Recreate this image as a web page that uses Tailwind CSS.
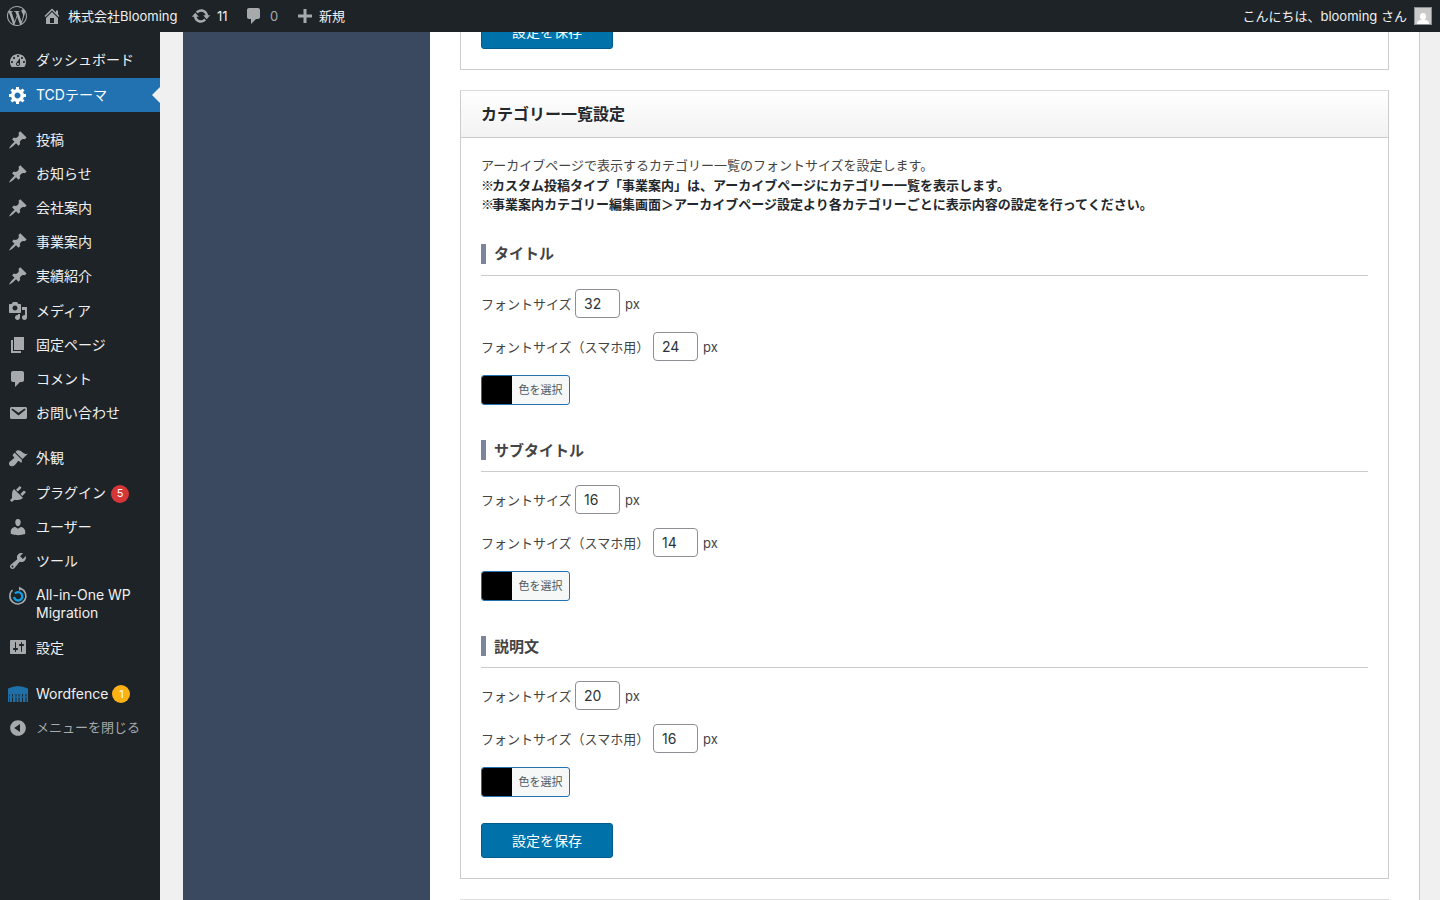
<!DOCTYPE html>
<html lang="ja">
<head>
    <meta charset="UTF-8">
    <title>TCDテーマ</title>
    <script src="https://cdn.jsdelivr.net/npm/@tailwindcss/browser@4"></script>
</head>
<body class="h-[900px] overflow-hidden bg-[#f0f0f1] font-['Inter','Noto_Sans_CJK_JP',sans-serif] text-[13px] text-[#444]">

    <!-- shared icons -->
    <svg class="hidden">
        <symbol id="pin" viewBox="0 0 20 20"><path d="M10.44 3.02l1.82-1.82 6.36 6.35-1.83 1.82c-1.05-.68-2.48-.57-3.41.36l-.75.75c-.92.93-1.04 2.35-.35 3.41l-1.83 1.82-2.41-2.41-2.8 2.79c-.42.42-3.38 2.71-3.8 2.29s1.86-3.39 2.28-3.81l2.79-2.79L4.1 9.36l1.83-1.82c1.05.69 2.48.57 3.4-.36l.75-.75c.93-.92 1.05-2.35.36-3.41z"/></symbol>
        <symbol id="comment" viewBox="0 0 20 20"><path d="M5 2h9c1.1 0 2 .9 2 2v7c0 1.1-.9 2-2 2h-2l-5 5v-5H5c-1.1 0-2-.9-2-2V4c0-1.1.9-2 2-2z"/></symbol>
    </svg>

    <!-- Admin Bar -->
    <div class="relative z-10 h-8 bg-[#1d2327] flex items-center justify-between text-[#f0f0f1] pl-[7px] pr-2">
        <div class="flex items-center">
            <svg class="w-5 h-5 fill-[#a7aaad]" viewBox="0 0 24 24"><path d="M21.469 6.825c.84 1.537 1.318 3.3 1.318 5.175 0 3.979-2.156 7.456-5.363 9.325l3.295-9.527c.615-1.54.82-2.771.82-3.864 0-.405-.026-.78-.07-1.11m-7.981.105c.647-.03 1.232-.105 1.232-.105.582-.075.514-.93-.067-.899 0 0-1.755.135-2.88.135-1.064 0-2.85-.15-2.85-.15-.585-.03-.661.855-.075.885 0 0 .54.061 1.125.09l1.68 4.605-2.37 7.08L5.354 6.9c.649-.03 1.234-.1 1.234-.1.585-.075.516-.93-.065-.896 0 0-1.746.138-2.874.138-.2 0-.438-.008-.69-.015C4.911 3.15 8.235 1.215 12 1.215c2.809 0 5.365 1.072 7.286 2.833-.046-.003-.091-.009-.141-.009-1.06 0-1.812.923-1.812 1.914 0 .89.513 1.643 1.06 2.531.411.72.89 1.643.89 2.977 0 .915-.354 1.994-.821 3.479l-1.075 3.585-3.9-11.61.001.014zM12 22.784c-1.059 0-2.081-.153-3.048-.437l3.237-9.406 3.315 9.087c.024.053.05.101.078.149-1.12.393-2.325.609-3.582.609M1.211 12c0-1.564.336-3.05.935-4.39L7.29 21.709C3.694 19.96 1.212 16.271 1.211 12M12 0C5.385 0 0 5.385 0 12s5.385 12 12 12 12-5.385 12-12S18.615 0 12 0"/></svg>
            <svg class="w-5 h-5 ml-[15px] fill-[#a7aaad]" viewBox="0 0 20 20"><path d="M16 8.5l1.53 1.53-1.06 1.06L10 4.62l-6.47 6.47-1.06-1.06L10 2.5l4 4v-2h2v4zm-6-2.46l6 5.99V18H4v-5.97zM12 17v-5H8v5h4z"/></svg>
            <span class="ml-[6px] w-[108px] pt-px whitespace-nowrap">株式会社Blooming</span>
            <svg class="w-5 h-5 ml-[15px] fill-[#a7aaad]" viewBox="0 0 20 20"><path d="M10.2 3.28c3.53 0 6.43 2.61 6.92 6h2.08l-3.5 4-3.5-4h2.32c-.45-1.97-2.21-3.45-4.32-3.45-1.45 0-2.73.71-3.54 1.78L4.95 5.66C6.23 4.2 8.11 3.28 10.2 3.28zm-.4 13.44c-3.52 0-6.43-2.61-6.92-6H.8l3.5-4c1.17 1.33 2.33 2.67 3.5 4H5.48c.45 1.97 2.21 3.45 4.32 3.45 1.45 0 2.73-.71 3.54-1.78l1.71 1.95c-1.28 1.46-3.15 2.38-5.25 2.38z"/></svg>
            <span class="ml-[6px] w-[14px] pt-px">11</span>
            <svg class="w-5 h-5 ml-[13px] fill-[#a7aaad]"><use href="#comment"/></svg>
            <span class="ml-[6px] w-[12px] pt-px text-[#a7aaad]">0</span>
            <svg class="w-5 h-5 ml-[13px] fill-[#a7aaad]" viewBox="0 0 20 20"><path d="M17 8.5v3h-5.5V17h-3v-5.5H3v-3h5.5V3h3v5.5z"/></svg>
            <span class="ml-[4px] pt-px whitespace-nowrap">新規</span>
        </div>
        <div class="flex items-center gap-[7px]">
            <span class="pt-px whitespace-nowrap">こんにちは、blooming さん</span>
            <div class="w-[18px] h-[18px] border border-[#8c8f94] bg-[#c9c9c9] flex flex-col items-center justify-end overflow-hidden">
                <div class="w-[6px] h-[7px] rounded-full bg-white"></div>
                <div class="w-[12px] h-[4px] rounded-t-full bg-white"></div>
            </div>
        </div>
    </div>

    <div class="flex h-[868px]">
        <!-- Sidebar -->
        <nav class="w-40 shrink-0 bg-[#1d2327] pt-[11px] text-[14px] leading-[18.2px] text-[#f0f0f1]">
            <a class="flex items-center h-[35px]">
                <svg class="w-5 h-5 ml-2 mr-2 fill-[#a7aaad]" viewBox="0 0 20 20"><path d="M3.76 16h12.48c1.1-1.37 1.76-3.11 1.76-5 0-4.42-3.58-8-8-8s-8 3.58-8 8c0 1.89.66 3.63 1.76 5zM10 4c.55 0 1 .45 1 1s-.45 1-1 1-1-.45-1-1 .45-1 1-1zM6 6c.55 0 1 .45 1 1s-.45 1-1 1-1-.45-1-1 .45-1 1-1zm8 0c.55 0 1 .45 1 1s-.45 1-1 1-1-.45-1-1 .45-1 1-1zm-5.37 5.55L12 7v6c0 1.1-.9 2-2 2s-2-.9-2-2c0-.57.24-1.08.63-1.45zM4 10c.55 0 1 .45 1 1s-.45 1-1 1-1-.45-1-1 .45-1 1-1zm12 0c.55 0 1 .45 1 1s-.45 1-1 1-1-.45-1-1 .45-1 1-1zm-5 3c0-.55-.45-1-1-1s-1 .45-1 1 .45 1 1 1 1-.45 1-1z"/></svg>
                ダッシュボード
            </a>
            <a class="relative flex items-center h-[34.2px] bg-[#2271b1] text-white">
                <svg class="w-5 h-5 ml-2 mr-2 fill-white" viewBox="0 0 20 20"><path d="M18 12h-2.18c-.17.7-.44 1.35-.81 1.93l1.54 1.54-2.1 2.1-1.54-1.54c-.58.36-1.23.63-1.91.79V19H8v-2.18c-.68-.16-1.33-.43-1.91-.79l-1.54 1.54-2.12-2.12 1.54-1.54c-.36-.58-.63-1.23-.79-1.91H1V9.03h2.17c.16-.7.44-1.35.8-1.94L2.43 5.55l2.1-2.1 1.54 1.54c.58-.37 1.24-.64 1.93-.81V2h3v2.18c.68.16 1.33.43 1.91.79l1.54-1.54 2.12 2.12-1.54 1.54c.36.59.64 1.24.8 1.94H18V12zm-8.5 1.5c1.66 0 3-1.34 3-3s-1.34-3-3-3-3 1.34-3 3 1.34 3 3 3z"/></svg>
                TCDテーマ
                <span class="absolute right-0 top-[9px] border-y-[8px] border-r-[8px] border-y-transparent border-r-[#f0f0f1]"></span>
            </a>

            <div class="h-[10.4px]"></div>
            <a class="flex items-center h-[34.2px]"><svg class="w-5 h-5 ml-2 mr-2 fill-[#a7aaad]"><use href="#pin"/></svg>投稿</a>
            <a class="flex items-center h-[34.2px]"><svg class="w-5 h-5 ml-2 mr-2 fill-[#a7aaad]"><use href="#pin"/></svg>お知らせ</a>
            <a class="flex items-center h-[34.2px]"><svg class="w-5 h-5 ml-2 mr-2 fill-[#a7aaad]"><use href="#pin"/></svg>会社案内</a>
            <a class="flex items-center h-[34.2px]"><svg class="w-5 h-5 ml-2 mr-2 fill-[#a7aaad]"><use href="#pin"/></svg>事業案内</a>
            <a class="flex items-center h-[34.2px]"><svg class="w-5 h-5 ml-2 mr-2 fill-[#a7aaad]"><use href="#pin"/></svg>実績紹介</a>
            <a class="flex items-center h-[34.2px]">
                <svg class="w-5 h-5 ml-2 mr-2 fill-[#a7aaad]" viewBox="0 0 20 20"><path d="M13 11V4c0-.55-.45-1-1-1h-1.67L9 1H5L3.67 3H2c-.55 0-1 .45-1 1v7c0 .55.45 1 1 1h10c.55 0 1-.45 1-1zM7 4.5c1.38 0 2.5 1.12 2.5 2.5S8.38 9.5 7 9.5 4.5 8.38 4.5 7 5.62 4.5 7 4.5zM14 6h5v10.5c0 1.38-1.12 2.5-2.5 2.5S14 17.88 14 16.5s1.12-2.5 2.5-2.5c.17 0 .34.02.5.05V9h-3V6zm-4 8.05V13h2v3.5c0 1.38-1.12 2.5-2.5 2.5S7 17.88 7 16.5 8.12 14 9.5 14c.17 0 .34.02.5.05z"/></svg>
                メディア
            </a>
            <a class="flex items-center h-[34.2px]">
                <svg class="w-5 h-5 ml-2 mr-2 fill-[#a7aaad]" viewBox="0 0 20 20"><path d="M6 15V2h10v13H6zm-1 1h8v2H3V5h2v11z"/></svg>
                固定ページ
            </a>
            <a class="flex items-center h-[34.2px]"><svg class="w-5 h-5 ml-2 mr-2 fill-[#a7aaad]"><use href="#comment"/></svg>コメント</a>
            <a class="flex items-center h-[34.2px]">
                <svg class="w-5 h-5 ml-2 mr-2 fill-[#a7aaad]" viewBox="0 0 20 20"><path d="M3.87 4h13.25C18.37 4 19 4.59 19 5.79v8.42c0 1.19-.63 1.79-1.88 1.79H3.87c-1.25 0-1.88-.6-1.88-1.79V5.79c0-1.2.63-1.79 1.88-1.79zm6.62 8.6l6.74-5.53c.24-.2.43-.66.13-1.07-.29-.41-.82-.42-1.17-.17l-5.7 3.86L4.8 5.83c-.35-.25-.88-.24-1.17.17-.3.41-.11.87.13 1.07z"/></svg>
                お問い合わせ
            </a>

            <div class="h-[11px]"></div>
            <a class="flex items-center h-[34.2px]">
                <svg class="w-5 h-5 ml-2 mr-2 fill-[#a7aaad]" viewBox="0 0 20 20"><path d="M14.48 11.06L7.41 3.99l1.5-1.5c.5-.56 2.3-.47 3.51.32 1.21.8 1.43 1.28 2.91 2.1 1.18.64 2.45 1.26 4.45.85zm-.71.71L6.7 4.7 4.93 6.47c-.39.39-.39 1.02 0 1.41l1.06 1.06c.39.39.39 1.03 0 1.42-.6.6-1.43 1.11-2.21 1.69-.35.26-.7.53-1.01.84C1.43 13.23 1 14.4 1 15.8c0 .86.36 1.43.72 1.79.49.49 1.13.7 1.78.7 1.4 0 2.55-.42 3.89-1.79.31-.31.58-.66.84-1.01.58-.78 1.09-1.61 1.69-2.21.39-.39 1.02-.39 1.41 0l1.06 1.06c.39.39 1.02.39 1.41 0z"/></svg>
                外観
            </a>
            <a class="flex items-center h-[34.2px] pt-[2px]">
                <svg class="w-5 h-5 ml-2 mr-2 fill-[#a7aaad]" viewBox="0 0 20 20"><path d="M13.11 4.36L9.87 7.6 8 5.73l3.24-3.24c.35-.34 1.05-.2 1.56.32.52.51.66 1.21.31 1.55zm-8 1.77l.91-1.12 9.01 9.01-1.19.84c-.71.71-2.63 1.16-3.82 1.16H6.14L4.9 17.26c-.59.59-1.54.59-2.12 0-.59-.58-.59-1.53 0-2.12l1.24-1.24v-3.88c0-1.13.4-3.19 1.09-3.89zm7.26 3.97l3.24-3.24c.34-.35 1.04-.21 1.55.31.52.51.66 1.21.31 1.55l-3.24 3.25z"/></svg>
                プラグイン
                <span class="ml-[5px] w-[18px] h-[18px] rounded-full bg-[#d63638] text-white text-[11px] flex items-center justify-center">5</span>
            </a>
            <a class="flex items-center h-[34.2px]">
                <svg class="w-5 h-5 ml-2 mr-2 fill-[#a7aaad]" viewBox="0 0 20 20"><path d="M10 9.25c-2.27 0-2.73-3.44-2.73-3.44C7 4.02 7.82 2 9.97 2c2.16 0 2.98 2.02 2.71 3.81 0 0-.41 3.44-2.68 3.44zm0 2.57L12.72 10c2.39 0 4.52 2.33 4.52 4.53v2.49s-3.65 1.13-7.24 1.13c-3.65 0-7.24-1.13-7.24-1.13v-2.49c0-2.25 1.94-4.48 4.47-4.48z"/></svg>
                ユーザー
            </a>
            <a class="flex items-center h-[34.2px]">
                <svg class="w-5 h-5 ml-2 mr-2 fill-[#a7aaad]" viewBox="0 0 20 20"><path d="M16.68 9.77c-1.34 1.34-3.3 1.67-4.95.99l-5.41 6.52c-.99.99-2.59.99-3.58 0s-.99-2.59 0-3.57l6.52-5.42c-.68-1.65-.35-3.61.99-4.95 1.28-1.28 3.12-1.62 4.72-1.06l-2.89 2.89 2.82 2.82 2.86-2.87c.53 1.58.18 3.39-1.08 4.65zM3.81 16.21c.4.39 1.04.39 1.43 0 .4-.4.4-1.04 0-1.43-.39-.4-1.03-.4-1.43 0-.39.39-.39 1.03 0 1.43z"/></svg>
                ツール
            </a>
            <a class="flex items-start pt-[7.7px] pb-[7.7px] leading-[18.5px]">
                <svg class="w-5 h-5 ml-2 mr-2 shrink-0" viewBox="0 0 20 20" fill="none"><path d="M12.800 2.500A8 8 0 1 1 4.500 4" stroke="#a7aaad" stroke-width="1.600"/><path d="M11 .5l3.500 2.200-3.500 2z" fill="#a7aaad"/><path d="M7 7.500a4.200 4.200 0 1 1-1 3.500" stroke="#12a0e6" stroke-width="2.400"/></svg>
                <span>All-in-One WP Migration</span>
            </a>
            <a class="flex items-center h-[34.2px]">
                <svg class="w-5 h-5 ml-2 mr-2 fill-[#a7aaad]" viewBox="0 0 20 20"><path d="M18 16V4c0-.55-.45-1-1-1H3c-.55 0-1 .45-1 1v12c0 .55.45 1 1 1h14c.55 0 1-.45 1-1zM8 11h1c.55 0 1 .45 1 1s-.45 1-1 1H8v1.500c0 .28-.22.5-.5.5s-.5-.22-.5-.5V13H6c-.55 0-1-.45-1-1s.45-1 1-1h1V5.500c0-.28.22-.5.5-.5s.5.22.5.5V11zm5-2h-1c-.55 0-1-.45-1-1s.45-1 1-1h1V5.500c0-.28.22-.5.5-.5s.5.22.5.5V7h1c.55 0 1 .45 1 1s-.45 1-1 1h-1v5.500c0 .28-.22.5-.5.5s-.5-.22-.5-.5V9z"/></svg>
                <span class="pt-[2px]">設定</span>
            </a>

            <div class="h-[12.2px]"></div>
            <a class="flex items-center h-[34.2px]">
                <svg class="w-5 h-5 ml-2 mr-2" viewBox="0 0 20 20" fill="#1f6fa8"><path d="M0 4.500Q5 2 10 2t10 2.500V18h-1.500v-8h-1v8H15v-8h-1v8h-2.500v-8h-1v8h-2v-8h-1v8H5v-8H4v8H1.500v-8h-.5v8H0z"/><path d="M0 12.500h20v1H0z"/></svg>
                Wordfence
                <span class="ml-[4px] w-[18px] h-[18px] rounded-full bg-[#fcb214] text-white text-[11px] flex items-center justify-center">1</span>
            </a>
            <a class="flex items-center h-[34.2px] pb-px text-[#a7aaad] text-[13px]">
                <svg class="w-5 h-5 ml-2 mr-2 fill-[#a7aaad]" viewBox="0 0 20 20"><path d="M10 2.160c4.330 0 7.840 3.510 7.840 7.840s-3.510 7.840-7.840 7.840S2.160 14.330 2.160 10 5.710 2.160 10 2.160zm2 11.720V6.120L6.180 9.970z"/></svg>
                メニューを閉じる
            </a>
        </nav>

        <!-- Page Background -->
        <div class="w-[23px] shrink-0"></div>
        <div class="w-[247px] shrink-0 bg-[#3b4960]"></div>

        <!-- Main Content -->
        <main class="w-[990px] shrink-0 bg-white border-r border-[#ccc] px-[30px] overflow-hidden">
            <div class="-mt-[31px] mb-5 border border-[#ccc] pt-3 px-5 pb-5">
                <button class="block w-[132px] h-[35px] rounded-[3px] bg-[#0071a9] border border-[#005c8a] text-white text-[14px]">設定を保存</button>
            </div>

            <section class="mb-5 border border-[#ccc] border-t-[#ddd]">
                <h2 class="h-[47px] px-5 flex items-center text-[16px] font-bold text-[#23282d] border-b border-[#ccc] bg-gradient-to-b from-white to-[#f2f2f2]">カテゴリー一覧設定</h2>
                <div class="px-5 pt-[17px] pb-5">
                    <p class="leading-[19.5px] font-['Noto_Sans_CJK_JP',sans-serif]">アーカイブページで表示するカテゴリー一覧のフォントサイズを設定します。<br>
                        <strong class="text-[#23282d]"><span class="tracking-[-2px]">※</span>カスタム投稿タイプ「事業案内」は、アーカイブページにカテゴリー一覧を表示します。</strong><br>
                        <strong class="text-[#23282d]"><span class="tracking-[-2px]">※</span>事業案内カテゴリー編集画面＞アーカイブページ設定より各カテゴリーごとに表示内容の設定を行ってください。</strong>
                    </p>

                    <!-- タイトル -->
                    <h3 class="mt-[30px] pb-[11px] border-b border-[#ccc]"><span class="flex items-center h-5 border-l-[5px] border-[#7b859d] pl-2 pt-px text-[15px] font-bold text-[#444]">タイトル</span></h3>
                    <div class="mt-[13px] flex items-center gap-1 h-[29px]">
                        <span class="w-[90px] pt-1 whitespace-nowrap">フォントサイズ</span>
                        <input type="text" value="32" class="w-[45px] h-[29px] px-2 border border-[#8c8f94] rounded text-[14px] text-[#2c3338]">
                        <span class="pt-1 ml-px">px</span>
                    </div>
                    <div class="mt-[14px] flex items-center gap-1 h-[29px]">
                        <span class="w-[168px] pt-1 whitespace-nowrap">フォントサイズ（スマホ用）</span>
                        <input type="text" value="24" class="w-[45px] h-[29px] px-2 border border-[#8c8f94] rounded text-[14px] text-[#2c3338]">
                        <span class="pt-1 ml-px">px</span>
                    </div>
                    <button class="mt-[14px] flex w-[89px] h-[30px] border border-[#2271b1] rounded-[3px] overflow-hidden bg-[#f6f7f7] text-[11px] text-[#50575e]">
                        <span class="w-[30px] h-full bg-black"></span><span class="flex-1 leading-[28px] text-center">色を選択</span>
                    </button>

                    <!-- サブタイトル -->
                    <h3 class="mt-[35px] pb-[11px] border-b border-[#ccc]"><span class="flex items-center h-5 border-l-[5px] border-[#7b859d] pl-2 pt-[3px] text-[15px] font-bold text-[#444]">サブタイトル</span></h3>
                    <div class="mt-[13px] flex items-center gap-1 h-[29px]">
                        <span class="w-[90px] pt-1 whitespace-nowrap">フォントサイズ</span>
                        <input type="text" value="16" class="w-[45px] h-[29px] px-2 border border-[#8c8f94] rounded text-[14px] text-[#2c3338]">
                        <span class="pt-1 ml-px">px</span>
                    </div>
                    <div class="mt-[14px] flex items-center gap-1 h-[29px]">
                        <span class="w-[168px] pt-1 whitespace-nowrap">フォントサイズ（スマホ用）</span>
                        <input type="text" value="14" class="w-[45px] h-[29px] px-2 border border-[#8c8f94] rounded text-[14px] text-[#2c3338]">
                        <span class="pt-1 ml-px">px</span>
                    </div>
                    <button class="mt-[14px] flex w-[89px] h-[30px] border border-[#2271b1] rounded-[3px] overflow-hidden bg-[#f6f7f7] text-[11px] text-[#50575e]">
                        <span class="w-[30px] h-full bg-black"></span><span class="flex-1 leading-[28px] text-center">色を選択</span>
                    </button>

                    <!-- 説明文 -->
                    <h3 class="mt-[35px] pb-[11px] border-b border-[#ccc]"><span class="flex items-center h-5 border-l-[5px] border-[#7b859d] pl-2 pt-[3px] text-[15px] font-bold text-[#444]">説明文</span></h3>
                    <div class="mt-[13px] flex items-center gap-1 h-[29px]">
                        <span class="w-[90px] pt-1 whitespace-nowrap">フォントサイズ</span>
                        <input type="text" value="20" class="w-[45px] h-[29px] px-2 border border-[#8c8f94] rounded text-[14px] text-[#2c3338]">
                        <span class="pt-1 ml-px">px</span>
                    </div>
                    <div class="mt-[14px] flex items-center gap-1 h-[29px]">
                        <span class="w-[168px] pt-1 whitespace-nowrap">フォントサイズ（スマホ用）</span>
                        <input type="text" value="16" class="w-[45px] h-[29px] px-2 border border-[#8c8f94] rounded text-[14px] text-[#2c3338]">
                        <span class="pt-1 ml-px">px</span>
                    </div>
                    <button class="mt-[14px] flex w-[89px] h-[30px] border border-[#2271b1] rounded-[3px] overflow-hidden bg-[#f6f7f7] text-[11px] text-[#50575e]">
                        <span class="w-[30px] h-full bg-black"></span><span class="flex-1 leading-[28px] text-center">色を選択</span>
                    </button>

                    <button class="block mt-[26px] w-[132px] h-[35px] rounded-[3px] bg-[#0071a9] border border-[#005c8a] text-white text-[14px]">設定を保存</button>
                </div>
            </section>

            <section class="h-10 border border-[#ddd]"></section>
        </main>
    </div>
</body>
</html>
